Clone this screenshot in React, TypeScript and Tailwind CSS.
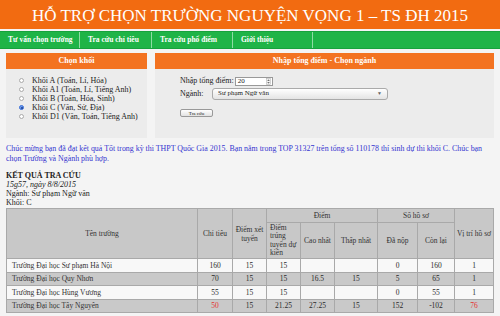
import React from 'react';

const khoiList = [
  { label: 'Khối A (Toán, Lí, Hóa)', checked: false },
  { label: 'Khối A1 (Toán, Lí, Tiếng Anh)', checked: false },
  { label: 'Khối B (Toán, Hóa, Sinh)', checked: false },
  { label: 'Khối C (Văn, Sử, Địa)', checked: true },
  { label: 'Khối D1 (Văn, Toán, Tiếng Anh)', checked: false },
];

const rows = [
  { ten: 'Trường Đại học Sư phạm Hà Nội', chiTieu: '160', xet: '15', trung: '15', cao: '', thap: '', daNop: '0', conLai: '160', viTri: '1', warn: false },
  { ten: 'Trường Đại học Quy Nhơn', chiTieu: '70', xet: '15', trung: '15', cao: '16.5', thap: '15', daNop: '5', conLai: '65', viTri: '1', warn: false },
  { ten: 'Trường Đại học Hùng Vương', chiTieu: '55', xet: '15', trung: '15', cao: '', thap: '', daNop: '0', conLai: '55', viTri: '1', warn: false },
  { ten: 'Trường Đại học Tây Nguyên', chiTieu: '50', xet: '15', trung: '21.25', cao: '27.25', thap: '15', daNop: '152', conLai: '-102', viTri: '76', warn: true },
];

const navItems = [
  { label: 'Tư vấn chọn trường', w: 'w-[80px]' },
  { label: 'Tra cứu chỉ tiêu', w: 'w-[72px]' },
  { label: 'Tra cứu phổ điểm', w: 'w-[81px]' },
  { label: 'Giới thiệu', w: 'w-[80px]' },
];

const th = 'border border-[#a9a9a9] font-normal text-[#333] align-middle';
const td = 'border border-[#a9a9a9] text-center text-[#2a2a2a]';

const App: React.FC = () => {
  return (
    <div
      className="w-[500px] h-[316px] overflow-hidden bg-[#f4f4f4] text-[#222]"
      style={{ fontFamily: '"Liberation Serif", "DejaVu Serif", serif' }}
    >
      {/* tiêu đề */}
      <div className="h-[29px] bg-[#f26b11] flex items-center justify-center text-white text-[17px] leading-none pt-[2px]">
        HỖ TRỢ CHỌN TRƯỜNG NGUYỆN VỌNG 1 – TS ĐH 2015
      </div>
      <div className="h-[2px] bg-[#f4f4f4]" />
      <div className="h-[18px] bg-[#1fb447] border-y border-[#17a23c] flex">
        {navItems.map((item) => (
          <div
            key={item.label}
            className={`${item.w} h-full flex items-center pl-[8px] text-white font-bold text-[7.5px] border-r border-[#8fdca3]`}
          >
            {item.label}
          </div>
        ))}
      </div>

      <div className="px-[6px]">
        {/* hai khung chọn */}
        <div className="flex gap-[8px] mt-[4px]">
          <div className="w-[141px] h-[85px] bg-[#ececec]">
            <div className="h-[16px] bg-[#f37321] flex items-center justify-center text-white font-bold text-[8px]">
              Chọn khối
            </div>
            <div className="pt-[7px] pl-[13px] flex flex-col">
              {khoiList.map((k) => (
                <div key={k.label} className="h-[9px] flex items-center text-[8px] leading-none whitespace-nowrap">
                  <span
                    className={`w-[5px] h-[5px] rounded-full border mr-[8px] flex items-center justify-center ${
                      k.checked ? 'border-[#3b6fd6] bg-[#6d9cf0]' : 'border-[#aaa] bg-white'
                    }`}
                  >
                    {k.checked && <span className="w-[2px] h-[2px] rounded-full bg-[#1d3f8f]" />}
                  </span>
                  {k.label}
                </div>
              ))}
            </div>
          </div>

          <div className="flex-1 h-[85px] bg-[#ececec]">
            <div className="h-[16px] bg-[#f37321] flex items-center justify-center text-white font-bold text-[8px]">
              Nhập tổng điểm - Chọn ngành
            </div>
            <div className="pl-[25px] pt-[7px] text-[8px] leading-none">
              <div className="flex items-center h-[10px]">
                <span>Nhập tổng điểm:</span>
                <div className="ml-[1px] w-[38px] h-[9px] bg-white border border-[#999] flex items-center justify-between pl-[2px] text-[7px]">
                  20
                  <svg width="5" height="7" viewBox="0 0 5 7" className="mr-[1px]">
                    <rect x="0.5" y="0.5" width="4" height="6" fill="#f2f2f2" stroke="#aaa" strokeWidth="0.5" />
                    <path d="M1.2 2.8 L2.5 1.4 L3.8 2.8 Z" fill="#444" />
                    <path d="M1.2 4.2 L2.5 5.6 L3.8 4.2 Z" fill="#444" />
                  </svg>
                </div>
              </div>
              <div className="flex items-center h-[13px] mt-[1px]">
                <span className="w-[32px]">Ngành:</span>
                <div className="w-[176px] h-[12px] rounded-[3px] border border-[#aaa] bg-gradient-to-b from-white to-[#e4e4e4] flex items-center justify-between px-[5px] text-[7px]">
                  Sư phạm Ngữ văn
                  <span className="text-[5px] text-[#666]">▼</span>
                </div>
              </div>
              <div className="mt-[9px] w-[33px] h-[8px] rounded-[2px] border border-[#999] bg-gradient-to-b from-white to-[#e2e2e2] flex items-center justify-center text-[5px]">
                Tra cứu
              </div>
            </div>
          </div>
        </div>

        {/* thông báo */}
        <p className="mt-[6px] max-w-[482px] text-[7.9px] leading-[10px] text-[#3535d0]">
          Chúc mừng bạn đã đạt kết quả Tốt trong kỳ thi THPT Quốc Gia 2015. Bạn nằm trong TOP 31327 trên tổng số 110178 thí sinh dự thi khối C. Chúc bạn chọn Trường và Ngành phù hợp.
        </p>

        {/* kết quả */}
        <div className="mt-[7px] text-[8px] leading-[9px]">
          <div className="font-bold">KẾT QUẢ TRA CỨU</div>
          <div className="italic">15g57, ngày 8/8/2015</div>
          <div>Ngành: Sư phạm Ngữ văn</div>
          <div>Khối: C</div>
        </div>

        <table className="mt-[1px] w-[487px] border-collapse text-[7.5px] leading-[9px] table-fixed text-[#333]">
          <colgroup>
            <col className="w-[191px]" />
            <col className="w-[35px]" />
            <col className="w-[34px]" />
            <col className="w-[34px]" />
            <col className="w-[34px]" />
            <col className="w-[43px]" />
            <col className="w-[40px]" />
            <col className="w-[37px]" />
            <col className="w-[39px]" />
          </colgroup>
          <thead className="bg-[#c8c8c8]">
            <tr className="h-[14px]">
              <th rowSpan={2} className={th}>Tên trường</th>
              <th rowSpan={2} className={th}>Chỉ tiêu</th>
              <th rowSpan={2} className={th}>Điểm xét tuyển</th>
              <th colSpan={3} className={th}>Điểm</th>
              <th colSpan={2} className={th}>Số hồ sơ</th>
              <th rowSpan={2} className={th}>Vị trí hồ sơ</th>
            </tr>
            <tr className="h-[36px]">
              <th className={`${th} text-left pl-[3px] leading-[8.5px]`}>Điểm trúng tuyển dự kiến</th>
              <th className={th}>Cao nhất</th>
              <th className={th}>Thấp nhất</th>
              <th className={th}>Đã nộp</th>
              <th className={th}>Còn lại</th>
            </tr>
          </thead>
          <tbody>
            {rows.map((r, i) => (
              <tr key={r.ten} className={`h-[13.5px] ${i % 2 === 0 ? 'bg-[#f8f8f8]' : 'bg-[#c9c9c9]'}`}>
                <td className="border border-[#a9a9a9] text-left pl-[5px]">{r.ten}</td>
                <td className={`${td} ${r.warn ? '!text-[#e53030]' : ''}`}>{r.chiTieu}</td>
                <td className={td}>{r.xet}</td>
                <td className={td}>{r.trung}</td>
                <td className={td}>{r.cao}</td>
                <td className={td}>{r.thap}</td>
                <td className={td}>{r.daNop}</td>
                <td className={td}>{r.conLai}</td>
                <td className={`${td} ${r.warn ? '!text-[#e53030]' : ''}`}>{r.viTri}</td>
              </tr>
            ))}
          </tbody>
        </table>
      </div>
    </div>
  );
};

export default App;
